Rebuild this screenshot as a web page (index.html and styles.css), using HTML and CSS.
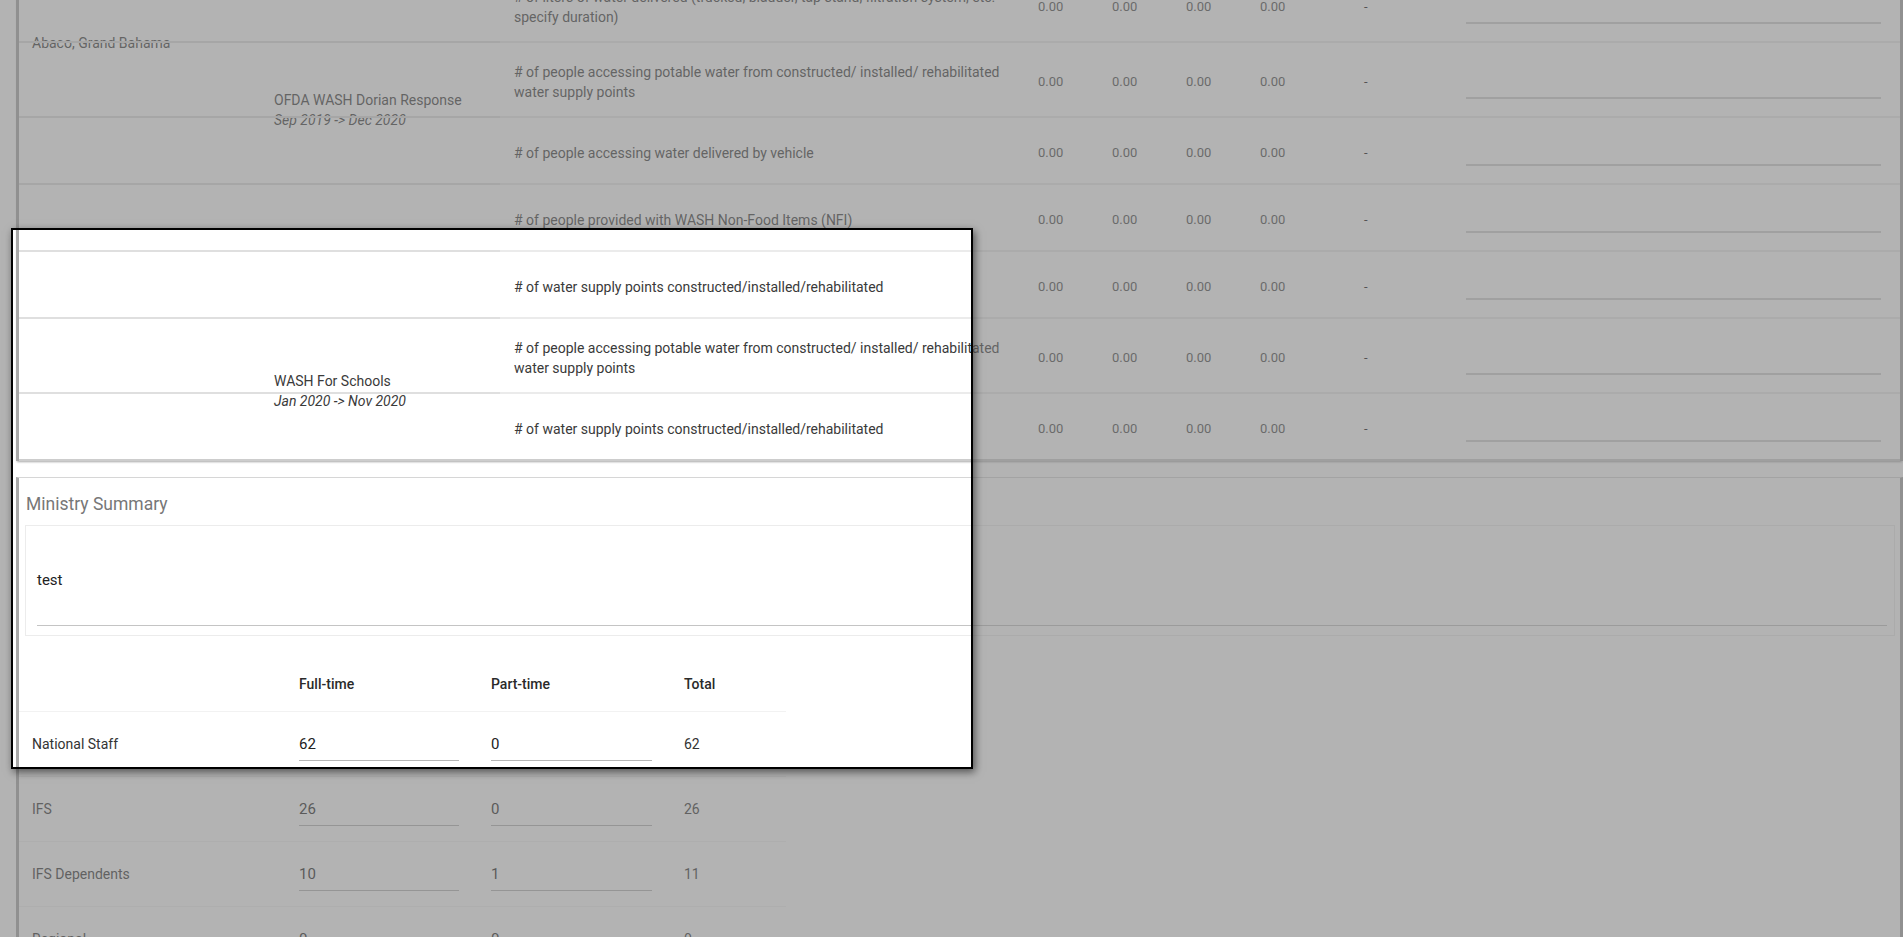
FILE: index.html
```html
<!DOCTYPE html>
<html lang="en">
<head>
<meta charset="utf-8">
<title>Ministry Report</title>
<link rel="stylesheet" href="styles.css">
</head>
<body>
<main class="page">
  <section class="card indicators">
    <div class="loc">Abaco, Grand Bahama</div>
    <div class="proj proj-ofda">
      <div class="proj-name">OFDA WASH Dorian Response</div>
      <div class="proj-dates">Sep 2019 -&gt; Dec 2020</div>
    </div>
    <div class="proj proj-schools">
      <div class="proj-name">WASH For Schools</div>
      <div class="proj-dates">Jan 2020 -&gt; Nov 2020</div>
    </div>

    <div class="row r1">
      <div class="cell spacer"></div>
      <div class="cell ind"># of liters of water delivered (trucked, bladder, tap stand, filtration system, etc. specify duration)</div>
      <div class="cell num">0.00</div><div class="cell num">0.00</div><div class="cell num">0.00</div><div class="cell num">0.00</div>
      <div class="cell dash">-</div>
      <div class="cell field"><div class="line"></div></div>
    </div>
    <div class="row r2">
      <div class="cell spacer"></div>
      <div class="cell ind"># of people accessing potable water from constructed/ installed/ rehabilitated water supply points</div>
      <div class="cell num">0.00</div><div class="cell num">0.00</div><div class="cell num">0.00</div><div class="cell num">0.00</div>
      <div class="cell dash">-</div>
      <div class="cell field"><div class="line"></div></div>
    </div>
    <div class="row r3">
      <div class="cell spacer"></div>
      <div class="cell ind"># of people accessing water delivered by vehicle</div>
      <div class="cell num">0.00</div><div class="cell num">0.00</div><div class="cell num">0.00</div><div class="cell num">0.00</div>
      <div class="cell dash">-</div>
      <div class="cell field"><div class="line"></div></div>
    </div>
    <div class="row r4">
      <div class="cell spacer"></div>
      <div class="cell ind"># of people provided with WASH Non-Food Items (NFI)</div>
      <div class="cell num">0.00</div><div class="cell num">0.00</div><div class="cell num">0.00</div><div class="cell num">0.00</div>
      <div class="cell dash">-</div>
      <div class="cell field"><div class="line"></div></div>
    </div>
    <div class="row r5">
      <div class="cell spacer"></div>
      <div class="cell ind"># of water supply points constructed/installed/rehabilitated</div>
      <div class="cell num">0.00</div><div class="cell num">0.00</div><div class="cell num">0.00</div><div class="cell num">0.00</div>
      <div class="cell dash">-</div>
      <div class="cell field"><div class="line"></div></div>
    </div>
    <div class="row r6">
      <div class="cell spacer"></div>
      <div class="cell ind"># of people accessing potable water from constructed/ installed/ rehabilitated water supply points</div>
      <div class="cell num">0.00</div><div class="cell num">0.00</div><div class="cell num">0.00</div><div class="cell num">0.00</div>
      <div class="cell dash">-</div>
      <div class="cell field"><div class="line"></div></div>
    </div>
    <div class="row r7">
      <div class="cell spacer"></div>
      <div class="cell ind"># of water supply points constructed/installed/rehabilitated</div>
      <div class="cell num">0.00</div><div class="cell num">0.00</div><div class="cell num">0.00</div><div class="cell num">0.00</div>
      <div class="cell dash">-</div>
      <div class="cell field"><div class="line"></div></div>
    </div>
  </section>

  <section class="card ministry">
    <h2 class="title">Ministry Summary</h2>
    <div class="summary-box">
      <div class="summary-text">test</div>
    </div>
    <div class="staff">
      <div class="staff-row staff-head">
        <div class="staff-label"></div>
        <div>Full-time</div>
        <div>Part-time</div>
        <div>Total</div>
      </div>
      <div class="staff-row">
        <div class="staff-label">National Staff</div>
        <div><div class="inp">62</div></div>
        <div><div class="inp inp-wide">0</div></div>
        <div>62</div>
      </div>
      <div class="staff-row">
        <div class="staff-label">IFS</div>
        <div><div class="inp">26</div></div>
        <div><div class="inp inp-wide">0</div></div>
        <div>26</div>
      </div>
      <div class="staff-row">
        <div class="staff-label">IFS Dependents</div>
        <div><div class="inp">10</div></div>
        <div><div class="inp inp-wide">1</div></div>
        <div>11</div>
      </div>
      <div class="staff-row">
        <div class="staff-label">Regional</div>
        <div><div class="inp">0</div></div>
        <div><div class="inp inp-wide">0</div></div>
        <div>0</div>
      </div>
    </div>
  </section>
</main>
<div class="spotlight"></div>
</body>
</html>
```
FILE: styles.css
```css
* { box-sizing: border-box; }
html, body { margin: 0; padding: 0; overflow: hidden; }
body {
  background: #fff;
  font-family: Roboto, "Noto Sans", "Liberation Sans", sans-serif;
  color: #3a3a3a;
  width: 1903px;
}

/* ---------- indicators card ---------- */
.indicators {
  margin: -32px 0 0 16px;
  display: grid;
  grid-template-columns: 242px 242px 1fr;
  box-shadow: 0 2px 2px -1px rgba(0,0,0,.35);
  font-size: 14px;
  line-height: 20px;
}
.loc {
  grid-column: 1;
  grid-row: 1 / 8;
  align-self: start;
  padding: 65px 0 0 16px;
}
.proj {
  grid-column: 2;
  align-self: start;
  padding-left: 16px;
}
.proj-ofda { grid-row: 1 / 6; padding-top: 122px; }
.proj-schools { grid-row: 6 / 8; padding-top: 52px; }
.proj-dates { font-style: italic; }

.row {
  grid-column: 1 / -1;
  position: relative;
  z-index: 1;
  display: grid;
  grid-template-columns: 481px 524px 74px 74px 74px 104px 102px 1fr;
  min-height: 67px;
  border-left: 3px solid #a9a9a9;
  border-right: 3px solid #a9a9a9;
}
.r1 { grid-row: 1; }
.r2 { grid-row: 2; }
.r3 { grid-row: 3; }
.r4 { grid-row: 4; }
.r5 { grid-row: 5; }
.r6 { grid-row: 6; }
.r7 { grid-row: 7; }

.cell {
  display: flex;
  align-items: center;
  padding: 19px 0 14px 14px;
  border-bottom: 2px solid #ebebeb;
}
.spacer { padding: 0; border-bottom-color: #dfdfdf; }
.ind { padding-right: 24px; color: #3a3a3a; }
.num { color: #4a4a4a; font-size: 13px; }
.dash { color: #111; font-size: 13px; }
.field {
  align-items: flex-end;
  padding: 0 19px 17px 14px;
}
.line { width: 100%; height: 2px; background: #cfcfcf; }
.r7 > .cell { border-bottom-color: #cdcdcd; }

/* ---------- ministry card ---------- */
.ministry {
  margin: 16px 0 0 16px;
  border-top: 1px solid #d6d6d6;
  border-left: 3px solid #a9a9a9;
  border-right: 3px solid #a9a9a9;
  padding: 0 5px 0 0;
}
.title {
  margin: 0;
  padding: 14px 0 0 7px;
  font-size: 17.5px;
  line-height: 24px;
  font-weight: 400;
  color: #777;
}
.summary-box {
  margin: 9px 0 0 6px;
  border: 1px solid #ececec;
  padding: 44px 7px 9px 11px;
}
.summary-text {
  font-size: 15px;
  line-height: 20px;
  color: #222;
  padding-bottom: 35px;
  border-bottom: 1px solid #c4c4c4;
}

.staff { margin-top: 20px; width: 767px; font-size: 14px; color: #333; }
.staff-row {
  display: grid;
  grid-template-columns: 266px 192px 193px 116px;
  align-items: center;
  height: 65px;
  border-bottom: 1px solid #f2f2f2;
}
.staff-row > div { padding-left: 14px; }
.staff-row > .staff-label { padding-left: 13px; }
.staff-head { height: 56px; font-weight: 500; color: #2a2a2a; }
.inp {
  width: 160px;
  padding: 6px 0;
  font-size: 15px;
  line-height: 20px;
  color: #222;
  border-bottom: 1px solid #b5b5b5;
}
.staff-row > div > .inp { padding-left: 0; }
.inp-wide { width: 161px; }

/* ---------- guided-tour spotlight ---------- */
.spotlight {
  position: fixed;
  left: 11px;
  top: 228px;
  width: 962px;
  height: 541px;
  border: 2px solid #000;
  pointer-events: none;
  z-index: 10;
  box-shadow: 2px 3px 8px rgba(0,0,0,.55), 0 0 0 4000px rgba(128,128,128,.6);
}
```
